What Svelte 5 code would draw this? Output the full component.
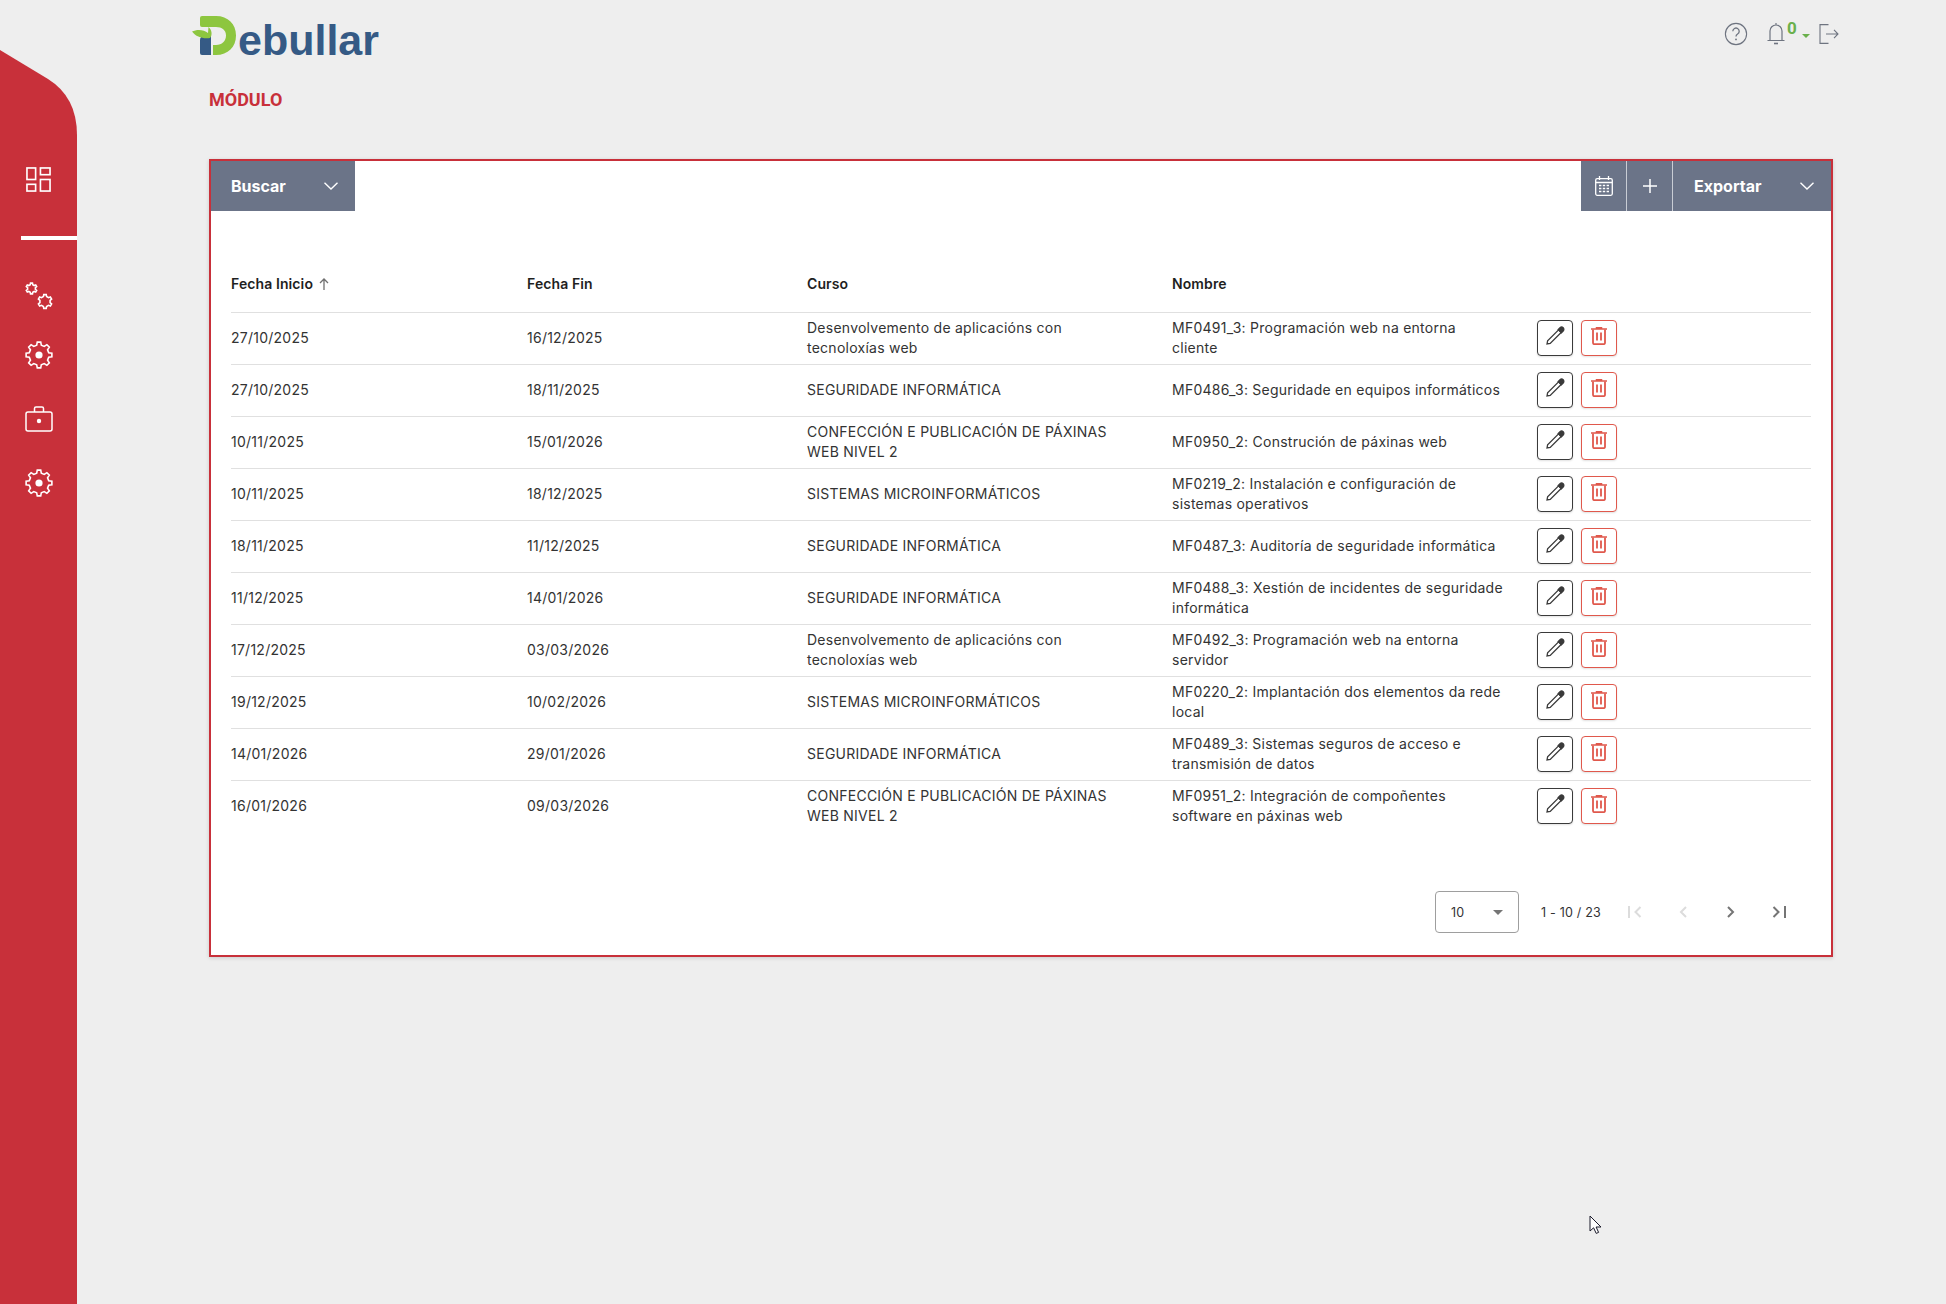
<script>
  const rows = [
    ["27/10/2025", "16/12/2025", "Desenvolvemento de aplicacións con tecnoloxías web", "MF0491_3: Programación web na entorna cliente"],
    ["27/10/2025", "18/11/2025", "SEGURIDADE INFORMÁTICA", "MF0486_3: Seguridade en equipos informáticos"],
    ["10/11/2025", "15/01/2026", "CONFECCIÓN E PUBLICACIÓN DE PÁXINAS WEB NIVEL 2", "MF0950_2: Construción de páxinas web"],
    ["10/11/2025", "18/12/2025", "SISTEMAS MICROINFORMÁTICOS", "MF0219_2: Instalación e configuración de sistemas operativos"],
    ["18/11/2025", "11/12/2025", "SEGURIDADE INFORMÁTICA", "MF0487_3: Auditoría de seguridade informática"],
    ["11/12/2025", "14/01/2026", "SEGURIDADE INFORMÁTICA", "MF0488_3: Xestión de incidentes de seguridade informática"],
    ["17/12/2025", "03/03/2026", "Desenvolvemento de aplicacións con tecnoloxías web", "MF0492_3: Programación web na entorna servidor"],
    ["19/12/2025", "10/02/2026", "SISTEMAS MICROINFORMÁTICOS", "MF0220_2: Implantación dos elementos da rede local"],
    ["14/01/2026", "29/01/2026", "SEGURIDADE INFORMÁTICA", "MF0489_3: Sistemas seguros de acceso e transmisión de datos"],
    ["16/01/2026", "09/03/2026", "CONFECCIÓN E PUBLICACIÓN DE PÁXINAS WEB NIVEL 2", "MF0951_2: Integración de compoñentes software en páxinas web"]
  ];

  // cog outline for the sidebar icons
  function cog(cx, cy, outer, inner, teeth) {
    let d = "";
    const step = (Math.PI * 2) / teeth;
    for (let i = 0; i < teeth; i++) {
      const a = i * step - Math.PI / 2;
      const pts = [
        [inner, a - step * 0.3],
        [outer, a - step * 0.17],
        [outer, a + step * 0.17],
        [inner, a + step * 0.3]
      ];
      for (const [r, t] of pts) {
        d += (d ? "L" : "M") + (cx + r * Math.cos(t)).toFixed(2) + " " + (cy + r * Math.sin(t)).toFixed(2);
      }
    }
    return d + "Z";
  }
</script>

<div class="page">
  <nav class="sidebar">
    <svg class="ico first" viewBox="0 0 26 26" width="25" height="25" fill="none" stroke="#fff" stroke-width="1.7">
      <rect x="1" y="1" width="9" height="12" /><rect x="15" y="1" width="10" height="7" /><rect x="1" y="18" width="9" height="7" /><rect x="15" y="13" width="10" height="12" />
    </svg>
    <div class="rule"></div>
    <svg class="ico cogs" viewBox="0 0 28 28" width="28" height="28" fill="none" stroke="#fff" stroke-width="1.6">
      <path d={cog(6.5, 6.5, 5.5, 4, 6)} /><path d={cog(20, 19.5, 7, 5.2, 6)} />
    </svg>
    <svg class="ico" viewBox="0 0 28 28" width="28" height="28" fill="none" stroke="#fff" stroke-width="1.6">
      <path d={cog(14, 14, 13, 10, 8)} /><circle cx="14" cy="14" r="3.6" fill="#fff" stroke="none" />
    </svg>
    <svg class="ico bag" viewBox="0 0 28 26" width="28" height="26" fill="none" stroke="#fff" stroke-width="1.5">
      <rect x="1" y="6" width="26" height="19" rx="2" /><path d="M9.5 6V2.5a1.5 1.5 0 0 1 1.5-1.5h6a1.5 1.5 0 0 1 1.5 1.5V6" /><circle cx="14" cy="15" r="2.2" fill="#fff" stroke="none" />
    </svg>
    <svg class="ico" viewBox="0 0 28 28" width="28" height="28" fill="none" stroke="#fff" stroke-width="1.6">
      <path d={cog(14, 14, 13, 10, 8)} /><circle cx="14" cy="14" r="3.6" fill="#fff" stroke="none" />
    </svg>
  </nav>

  <main class="main">
    <header class="top">
      <div class="logo">
        <svg viewBox="0 0 46 41" width="46" height="41">
          <path d="M10 0H24C36 0 44 8 44 19.5S36 39 24 39H21V29H24C30 29 34 25 34 19.5S30 11 24 11H10Q8 11 8 9V2Q8 0 10 0Z" fill="#8dc63f" />
          <path d="M8 24Q8 20 13 20H19V39H10Q8 39 8 37Z" fill="#355a85" />
          <path d="M0 15.5C5 13 12 13.5 16 17L16.5 11C20 14 20.5 19 18 22C11 23 4 21 0 15.5Z" fill="#8dc63f" />
        </svg>
        <span>ebullar</span>
      </div>
      <div class="tools">
        <svg viewBox="0 0 24 24" width="24" height="24" fill="none" stroke="#6e7480" stroke-width="1.1">
          <circle cx="12" cy="12" r="10.6" />
          <path d="M8.8 9.2a3.2 3.2 0 1 1 4.8 2.8c-1 .6-1.6 1.2-1.6 2.6" stroke-width="1.3" /><circle cx="12" cy="17.4" r=".9" fill="#6e7480" stroke="none" />
        </svg>
        <div class="bell">
          <svg viewBox="0 0 20 24" width="20" height="24" fill="none" stroke="#6e7480" stroke-width="1.2">
            <path d="M4 18V9a6 6 0 0 1 12 0v9M1.5 18.5h17M10 1v2" /><path d="M8 21.5h4" stroke-width="1.6" />
          </svg>
          <b>0</b>
          <i class="caret"></i>
        </div>
        <svg class="exit" viewBox="0 0 20 20" width="20" height="20" fill="none" stroke="#6e7480" stroke-width="1.1">
          <path d="M9.5.6H1v18.8h8.5M7 10h12M15 5.8 19 10l-4 4.2" />
        </svg>
      </div>
    </header>

    <h1 class="title">MÓDULO</h1>

    <section class="card">
      <div class="bar">
        <button class="bar-btn buscar"><span>Buscar</span>
          <svg viewBox="0 0 14 8" width="14" height="8" fill="none" stroke="#fff" stroke-width="1.4"><path d="M.5.7 7 7 13.5.7" /></svg>
        </button>
        <div class="bar-right">
          <button class="bar-btn square" aria-label="Calendario">
            <svg viewBox="0 0 18 20" width="18" height="20" fill="none" stroke="#fff" stroke-width="1.3">
              <rect x=".7" y="2.7" width="16.6" height="16.6" rx="1.5" /><path d="M4.5 0v4M13.5 0v4M.7 6.5h16.6" />
              <path d="M4 9.5h2.4M7.8 9.5h2.4M11.6 9.5H14M4 12.5h2.4M7.8 12.5h2.4M11.6 12.5H14M4 15.5h2.4M7.8 15.5h2.4M11.6 15.5H14" stroke-width="1.6" />
            </svg>
          </button>
          <button class="bar-btn square" aria-label="Engadir">
            <svg viewBox="0 0 14 14" width="14" height="14" fill="none" stroke="#fff" stroke-width="1.5"><path d="M7 0v14M0 7h14" /></svg>
          </button>
          <button class="bar-btn exportar"><span>Exportar</span>
            <svg viewBox="0 0 14 8" width="14" height="8" fill="none" stroke="#fff" stroke-width="1.4"><path d="M.5.7 7 7 13.5.7" /></svg>
          </button>
        </div>
      </div>

      <table>
        <colgroup><col class="c1" /><col class="c2" /><col class="c3" /><col class="c4" /><col /></colgroup>
        <thead>
          <tr>
            <th>Fecha Inicio
              <svg class="sort" viewBox="0 0 10 12" width="10" height="12" fill="none" stroke="#707070" stroke-width="1.3"><path d="M5 12V1M1 5l4-4 4 4" /></svg>
            </th>
            <th>Fecha Fin</th>
            <th>Curso</th>
            <th>Nombre</th>
            <th></th>
          </tr>
        </thead>
        <tbody>
          {#each rows as r}
            <tr>
              <td>{r[0]}</td>
              <td>{r[1]}</td>
              <td class="curso">{r[2]}</td>
              <td class="nombre">{r[3]}</td>
              <td>
                <div class="actions">
                  <button class="act edit" aria-label="Editar">
                    <svg viewBox="0 0 20 20" width="20" height="20" fill="none" stroke="#3a3a3a" stroke-width="1.3">
                      <path d="M2 18 2.6 14.8 13.6 3.8 16.2 6.4 5.2 17.4z" /><path d="M15 1.8a1.6 1.6 0 0 1 3.2 3.2L16.4 6.8 13.2 3.6z" fill="#3a3a3a" />
                    </svg>
                  </button>
                  <button class="act del" aria-label="Eliminar">
                    <svg viewBox="0 0 16 18" width="16" height="18" fill="none" stroke="#e0584c" stroke-width="1.5">
                      <path d="M0 2h16M5.5 2V.8h5V2" /><path d="M2 2.5v13.2a1.5 1.5 0 0 0 1.5 1.5h9a1.5 1.5 0 0 0 1.5-1.5V2.5" stroke-width="1.8" /><path d="M6 5.5v8M10 5.5v8" stroke-width="1.8" />
                    </svg>
                  </button>
                </div>
              </td>
            </tr>
          {/each}
        </tbody>
      </table>

      <div class="pager">
        <div class="size"><span>10</span><i></i></div>
        <span class="range">1 - 10 / 23</span>
        <button class="nav" disabled aria-label="Primeira">
          <svg viewBox="0 0 14 12" width="14" height="12" fill="none" stroke="#dcdcdc" stroke-width="2"><path d="M1 0v12M12.5 1l-5 5 5 5" /></svg>
        </button>
        <button class="nav" disabled aria-label="Anterior">
          <svg viewBox="0 0 8 12" width="8" height="12" fill="none" stroke="#dcdcdc" stroke-width="2"><path d="M7 1 2 6l5 5" /></svg>
        </button>
        <button class="nav" aria-label="Seguinte">
          <svg viewBox="0 0 8 12" width="8" height="12" fill="none" stroke="#757575" stroke-width="2"><path d="m1 1 5 5-5 5" /></svg>
        </button>
        <button class="nav" aria-label="Última">
          <svg viewBox="0 0 14 12" width="14" height="12" fill="none" stroke="#757575" stroke-width="2"><path d="M13 0v12M1.5 1l5 5-5 5" /></svg>
        </button>
      </div>
    </section>
  </main>

  <svg class="cursor" viewBox="0 0 13 20" width="13" height="20">
    <path d="M1 1v15l3.6-3.2 2.6 5.6 2.4-1-2.5-5.4H12z" fill="#fff" stroke="#1a1a2a" stroke-width="1" />
  </svg>
</div>

<style>
  :global(body) {
    margin: 0;
    background: #eeeeee;
    font-family: Inter, "Liberation Sans", sans-serif;
  }

  .page {
    display: flex;
    min-height: 1304px;
    position: relative;
    overflow: hidden;
  }

  .sidebar {
    width: 77px;
    flex: none;
    background: #c8303a;
    clip-path: path("M0 50 L48 79 Q77 97 77 135 L77 1304 L0 1304 Z");
    display: flex;
    flex-direction: column;
    align-items: center;
    padding-top: 167px;
    box-sizing: border-box;
  }

  .ico { display: block; }
  .rule {
    width: 56px;
    height: 4px;
    background: #fff;
    align-self: flex-end;
    margin: 44px 0 42px;
  }
  .cogs { margin-bottom: 31px; }
  .bag { margin: 37px 0 37px; }

  .main {
    flex: 1;
    padding: 16px 113px 0 132px;
    box-sizing: border-box;
    min-width: 0;
  }

  .top {
    display: flex;
    justify-content: space-between;
    align-items: flex-start;
    height: 41px;
  }

  .logo {
    display: flex;
    align-items: flex-end;
    margin-left: -17px;
    height: 41px;
  }
  .logo span {
    font: 700 43px/41px "Liberation Sans", sans-serif;
    color: #355a85;
    position: relative;
    top: 4px;
  }

  .tools {
    display: flex;
    align-items: center;
    margin-top: 6px;
    margin-right: -6px;
  }
  .bell {
    display: flex;
    align-items: center;
    margin-left: 18px;
    position: relative;
    width: 53px;
    height: 24px;
  }
  .bell b {
    color: #6ab04c;
    font: 700 17px/19px Roboto, sans-serif;
    position: absolute;
    left: 21px;
    top: -3px;
  }
  .caret {
    position: absolute;
    left: 36px;
    top: 12px;
    border: 4px solid transparent;
    border-bottom: 0;
    border-top-color: #6ab04c;
  }

  .title {
    margin: 32px 0 49px;
    font: 700 18px/21px Roboto, sans-serif;
    color: #c8303a;
    letter-spacing: 0;
  }

  .card {
    background: #fff;
    border: 2px solid #c8303a;
    box-shadow: 0 1px 4px rgba(0, 0, 0, 0.15);
    height: 798px;
    box-sizing: border-box;
  }

  .bar {
    display: flex;
    justify-content: space-between;
    height: 50px;
  }
  .bar-right { display: flex; }
  .bar-btn {
    background: #6b7488;
    border: 0;
    color: #fff;
    height: 50px;
    font: 700 16px Inter, sans-serif;
    display: flex;
    align-items: center;
    justify-content: space-between;
    padding: 0;
  }
  .buscar { width: 144px; padding: 0 9px 0 20px; box-sizing: border-box; }
  .buscar svg { margin-right: 8px; }
  .square { width: 46px; justify-content: center; border-right: 1px solid #c9cdd5; box-sizing: border-box; }
  .exportar { width: 158px; padding: 0 17px 0 21px; box-sizing: border-box; }

  table {
    width: 1580px;
    margin: 47px 0 0 20px;
    border-collapse: collapse;
    table-layout: fixed;
    letter-spacing: 0.25px;
  }
  .c1 { width: 296px; }
  .c2 { width: 280px; }
  .c3 { width: 365px; }
  .c4 { width: 365px; }

  thead tr { height: 54px; }
  tbody tr { height: 52px; }
  tr { border-bottom: 1px solid #e0e0e0; }
  tbody tr:last-child { border-bottom: 0; }

  th {
    font-size: 14px;
    font-weight: 600;
    color: #1f1f1f;
    text-align: left;
    padding: 0 0 2px;
    letter-spacing: 0.1px;
  }
  .sort { margin-left: 2px; vertical-align: -1px; }
  td {
    font-size: 14px;
    line-height: 20px;
    color: #333;
    padding: 0 24px 0 0;
  }
  td.curso { padding-right: 54px; }
  td.nombre { padding-right: 33px; }

  .actions { display: flex; gap: 8px; }
  .act {
    width: 36px;
    height: 36px;
    padding: 0;
    background: #fff;
    border: 1.5px solid #3a3a3a;
    border-radius: 4px;
    display: flex;
    align-items: center;
    justify-content: center;
    box-shadow: 0 1px 2px rgba(0, 0, 0, 0.12);
  }
  .act svg { margin-top: -4px; }
  .del { border-color: #e0584c; }

  .pager {
    display: flex;
    align-items: center;
    justify-content: flex-end;
    margin-top: 56px;
    padding-right: 28px;
    height: 48px;
  }
  .size {
    width: 84px;
    height: 42px;
    box-sizing: border-box;
    border: 1px solid #9e9e9e;
    border-radius: 4px;
    display: flex;
    align-items: center;
    justify-content: space-between;
    padding: 0 15px;
    font-size: 12.5px;
    color: #333;
  }
  .size i {
    border: 5px solid transparent;
    border-top-color: #757575;
    border-bottom: 0;
  }
  .range {
    font-size: 12.5px;
    color: #333;
    margin: 0 10px 0 22px;
    letter-spacing: 0.2px;
  }
  .nav {
    width: 48px;
    height: 48px;
    padding: 0;
    background: none;
    border: 0;
    display: flex;
    align-items: center;
    justify-content: center;
  }

  .cursor {
    position: absolute;
    left: 1589px;
    top: 1215px;
  }
</style>
